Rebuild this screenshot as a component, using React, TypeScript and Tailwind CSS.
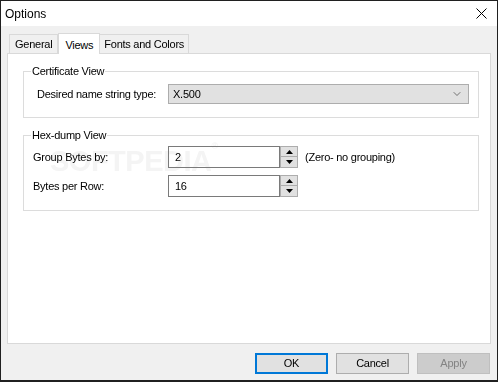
import { ChevronDown } from "lucide-react";

const ui = "font-['Liberation_Sans',Arial,sans-serif] text-[11px] tracking-[-0.25px] text-black";

function Spin({ value }: { value: string }) {
  return (
    <div className="flex h-[22px]">
      <div className="w-[112px] h-[22px] border border-[#7a7a7a] bg-white flex items-center pl-[6px]">
        {value}
      </div>
      <div className="flex flex-col w-[18px]">
        <div className="h-[11px] border border-[#adadad] bg-[#e1e1e1] flex items-center justify-center">
          <svg width="7" height="4" viewBox="0 0 7 4">
            <path d="M0 4 L3.5 0 L7 4 Z" fill="#000" />
          </svg>
        </div>
        <div className="h-[11px] border border-t-0 border-[#adadad] bg-[#e1e1e1] flex items-center justify-center">
          <svg width="7" height="4" viewBox="0 0 7 4">
            <path d="M0 0 L7 0 L3.5 4 Z" fill="#000" />
          </svg>
        </div>
      </div>
    </div>
  );
}

export default function App() {
  return (
    <div className={`w-[498px] h-[382px] border border-b-2 border-[#202020] bg-[#f0f0f0] flex flex-col ${ui}`}>
      {/* Title bar */}
      <div className="h-[25px] bg-white flex items-center justify-between pl-[4px] pr-[10px] font-['Liberation_Sans',Arial,sans-serif] text-[12px] tracking-normal">
        <span>Options</span>
        <svg width="11" height="11" viewBox="0 0 11 11">
          <path d="M0.5 0.5 L10.5 10.5 M10.5 0.5 L0.5 10.5" stroke="#000" strokeWidth="1" />
        </svg>
      </div>

      <div className="flex-1 flex flex-col px-[6px] pt-[7px]">
        {/* Tabs */}
        <div className="flex items-end h-[20px] pl-[2px]">
          <div className="h-[19px] border border-b-0 border-[#d9d9d9] bg-[#f0f0f0] px-[5px] flex items-center">
            General
          </div>
          <div className="h-[21px] -mb-px relative z-10 border border-b-0 border-[#d9d9d9] bg-white px-[6px] flex items-start pt-[3px]">
            Views
          </div>
          <div className="h-[19px] border border-b-0 border-l-0 border-[#d9d9d9] bg-[#f0f0f0] px-[4px] flex items-center">
            Fonts and Colors
          </div>
        </div>

        {/* Panel */}
        <div className="h-[291px] border border-[#d9d9d9] bg-white relative pl-[15px] pr-[11px] pt-[10px]">
          <fieldset className="border border-[#dcdcdc]">
            <legend className="ml-[7px] px-[1px] leading-[14px]">Certificate View</legend>
            <div className="flex items-center pl-[13px] pr-[8px] pt-[6px] pb-[13px]">
              <span className="w-[131px]">Desired name string type:</span>
              <div className="w-[301px] h-[20px] border border-[#adadad] bg-[#e1e1e1] flex items-center justify-between pl-[4px] pr-[5px]">
                <span>X.500</span>
                <ChevronDown size={12} strokeWidth={1.3} color="#333" />
              </div>
            </div>
          </fieldset>

          <fieldset className="mt-[10px] border border-[#dcdcdc]">
            <legend className="ml-[7px] px-[1px] leading-[14px]">Hex-dump View</legend>
            <div className="flex flex-col gap-[7px] pl-[9px] pr-[8px] pt-[4px] pb-[13px]">
              <div className="flex items-center">
                <span className="w-[135px]">Group Bytes by:</span>
                <Spin value="2" />
                <span className="ml-[7px]">(Zero- no grouping)</span>
              </div>
              <div className="flex items-center">
                <span className="w-[135px]">Bytes per Row:</span>
                <Spin value="16" />
              </div>
            </div>
          </fieldset>

          {/* watermark */}
          <div className="absolute left-[42px] top-[86px] pointer-events-none select-none mix-blend-darken font-['Liberation_Sans',Arial,sans-serif] font-bold text-[29px] tracking-[-0.5px] text-[#f4f4f4]">
            SOFTPEDIA<span className="text-[9px] align-top">®</span>
          </div>
        </div>

        {/* Buttons */}
        <div className="flex justify-end gap-[8px] mt-[9px] pr-px">
          <button className="w-[73px] h-[21px] border-2 border-[#0078d7] bg-[#e1e1e1]">OK</button>
          <button className="w-[73px] h-[21px] border border-[#adadad] bg-[#e1e1e1]">Cancel</button>
          <button className="w-[73px] h-[21px] border border-[#bfbfbf] bg-[#cccccc] text-[#838383]">Apply</button>
        </div>
      </div>
    </div>
  );
}
